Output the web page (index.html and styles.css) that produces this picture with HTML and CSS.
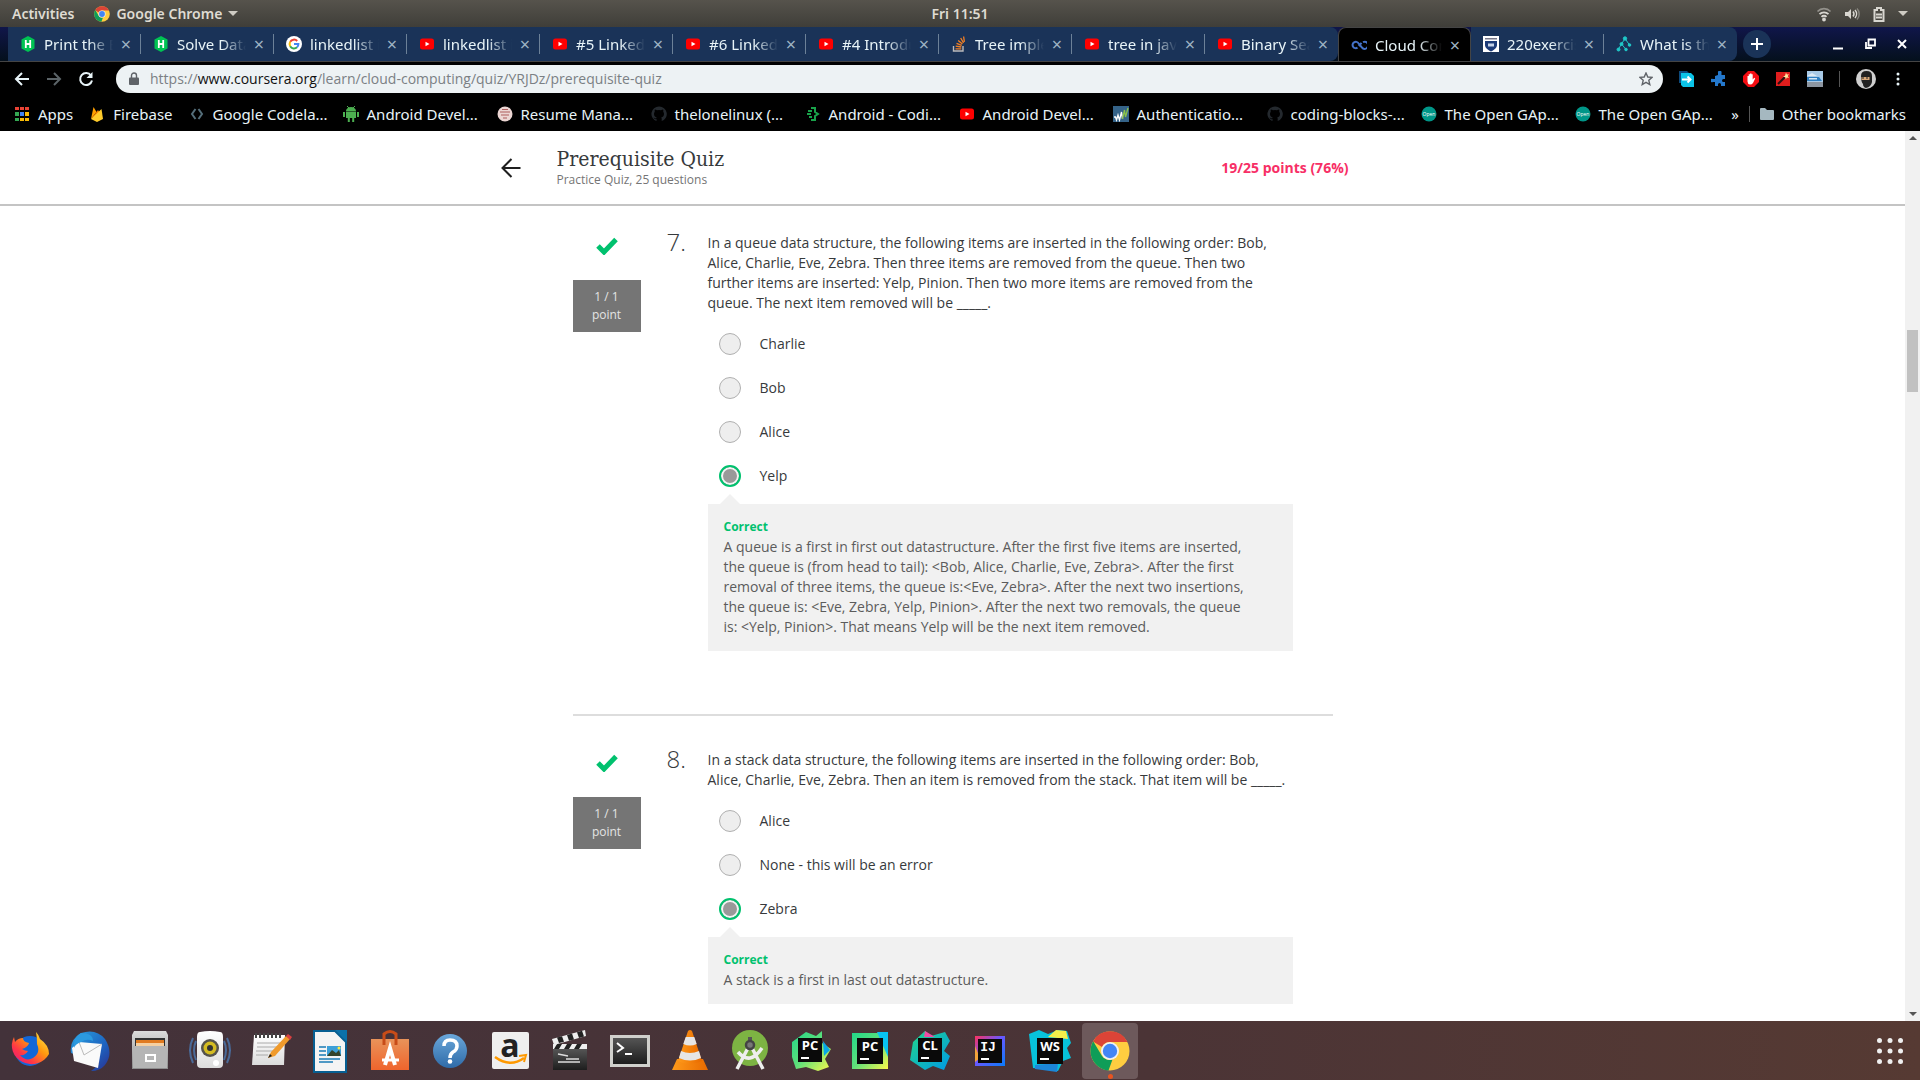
FILE: index.html
```html
<!DOCTYPE html>
<html lang="en">
<head>
<meta charset="utf-8">
<title>Prerequisite Quiz</title>
<link rel="stylesheet" href="styles.css">
</head>
<body>
<svg class="defs" width="0" height="0" aria-hidden="true">
  <defs>
    <linearGradient id="fox" x1="1" y1="0" x2="0" y2="1"><stop offset="0" stop-color="#fff44f"/><stop offset=".4" stop-color="#ff980e"/><stop offset=".7" stop-color="#ff3647"/><stop offset="1" stop-color="#e31587"/></linearGradient>
    <linearGradient id="bird" x1="0" y1="0" x2="1" y2="1"><stop offset="0" stop-color="#2aa3e0"/><stop offset=".6" stop-color="#1d63c0"/><stop offset="1" stop-color="#2b2f8f"/></linearGradient>
    <linearGradient id="metal" x1="0" y1="0" x2="0" y2="1"><stop offset="0" stop-color="#dcdcdc"/><stop offset="1" stop-color="#8c8c8c"/></linearGradient>
    <linearGradient id="paper" x1="0" y1="0" x2="0" y2="1"><stop offset="0" stop-color="#ffffff"/><stop offset="1" stop-color="#dcdcdc"/></linearGradient>
    <linearGradient id="bag" x1="0" y1="0" x2="0" y2="1"><stop offset="0" stop-color="#e8935a"/><stop offset="1" stop-color="#f0642c"/></linearGradient>
    <linearGradient id="ask" x1="0" y1="0" x2="0" y2="1"><stop offset="0" stop-color="#6aa7da"/><stop offset="1" stop-color="#2f6ba8"/></linearGradient>
    <linearGradient id="coal" x1="0" y1="0" x2="0" y2="1"><stop offset="0" stop-color="#555"/><stop offset="1" stop-color="#1d1d1d"/></linearGradient>
    <linearGradient id="idea" x1="0" y1="0" x2="1" y2="1"><stop offset="0" stop-color="#fe315d"/><stop offset=".45" stop-color="#6b57ff"/><stop offset="1" stop-color="#087cfa"/></linearGradient>
    <linearGradient id="py" x1="0" y1="0" x2="1" y2="1"><stop offset="0" stop-color="#21d789"/><stop offset=".5" stop-color="#5fe07a"/><stop offset="1" stop-color="#fcf84a"/></linearGradient>
    <linearGradient id="cl" x1="0" y1="0" x2="1" y2="1"><stop offset="0" stop-color="#21d789"/><stop offset="1" stop-color="#009ae5"/></linearGradient>
    <linearGradient id="cone" x1="0" y1="0" x2="1" y2="0"><stop offset="0" stop-color="#ff9a1a"/><stop offset="1" stop-color="#e86a00"/></linearGradient>
    <symbol id="chrome" viewBox="0 0 40 40">
      <circle cx="20" cy="20" r="19.500" fill="#ffcd40"/>
      <path d="M3 10.500A19.500 19.500 0 0 1 37.500 11H20A9 9 0 0 0 12 16z" fill="#db4437"/>
      <path d="M3.200 10.200 12 25A9 9 0 0 0 22.500 28.600L18.500 39.500A19.500 19.500 0 0 1 3.200 10.200z" fill="#0f9d58"/>
      <circle cx="20" cy="20" r="9" fill="#f1f1f1"/><circle cx="20" cy="20" r="7.200" fill="#4285f4"/>
    </symbol>
    <symbol id="youtube" viewBox="0 0 16 16"><rect x="1" y="2.500" width="14" height="11" rx="2.500" fill="#f00"/><path d="M6.500 5.700v4.600l4-2.300z" fill="#fff"/></symbol>
    <symbol id="hacker" viewBox="0 0 16 16"><path d="M8 0l6.500 3.500v9L8 16l-6.500-3.500v-9z" fill="#00c353"/><path d="M5.800 4v8M10.200 4v8M5.800 8h4.400" stroke="#fff" stroke-width="1.800"/></symbol>
    <symbol id="octo" viewBox="0 0 16 16"><path d="M8 .5a7.500 7.500 0 0 0-2.500 14.600v-2c-2 .4-2.500-1-3-1.700 1 0 1.500 1.100 2.600 1 .2-.6.500-.9.700-1C3.900 11.100 3 10 3 7.800c0-.9.300-1.600.8-2.100-.2-.6-.2-1.400.1-2.200.8 0 1.500.4 2.100.8a7.300 7.300 0 0 1 4 0c.6-.4 1.300-.8 2.100-.8.300.8.300 1.600.1 2.200.5.500.8 1.200.8 2.100 0 2.200-.9 3.300-2.800 3.600.4.400.5 1 .5 1.700v2A7.500 7.500 0 0 0 8 .5z" fill="#24292e"/></symbol>
    <symbol id="gapps" viewBox="0 0 16 16"><circle cx="8" cy="8" r="7.500" fill="#009688"/><text x="8" y="10" font-size="5" font-family="Open Sans, sans-serif" text-anchor="middle" fill="#fff">Open</text></symbol>
  </defs>
</svg>

<header class="panel">
  <div class="panel-left">
    <span>Activities</span>
    <span class="app"><svg width="16" height="16"><use href="#chrome"/></svg>Google Chrome<i class="caret"></i></span>
  </div>
  <time>Fri 11:51</time>
  <div class="panel-right">
    <svg width="16" height="16" viewBox="0 0 16 16" fill="none" stroke="#d8d6d0" stroke-width="1.800"><path d="M1.500 5.500a9 9 0 0 1 13 0" opacity=".5"/><path d="M3.500 8.200a6.300 6.300 0 0 1 9 0M5.500 10.800a3.500 3.500 0 0 1 5 0"/><circle cx="8" cy="13.500" r="1" fill="#d8d6d0"/></svg>
    <svg width="16" height="16" viewBox="0 0 16 16" fill="none" stroke="#d8d6d0" stroke-width="1.500"><path d="M1 6h3l3-3v10l-3-3H1z" fill="#d8d6d0" stroke="none"/><path d="M9 5.500a4 4 0 0 1 0 5M11 4a6 6 0 0 1 0 8"/><path d="M13 2.500a8 8 0 0 1 0 11" opacity=".4"/></svg>
    <svg width="14" height="16" viewBox="0 0 14 16" fill="none" stroke="#d8d6d0" stroke-width="2"><path d="M5 2h4v2h2.500v11h-9V4H5z"/><path d="M4 8.500h6M4 11.500h6"/></svg>
    <i class="caret"></i>
  </div>
</header>

<nav class="tabs" aria-label="Tabs">
  <div class="tab"><svg width="16" height="16"><use href="#hacker"/></svg><span>Print the Elements</span><button aria-label="Close tab">×</button></div>
  <div class="tab"><svg width="16" height="16"><use href="#hacker"/></svg><span>Solve Data Structures</span><button aria-label="Close tab">×</button></div>
  <div class="tab"><svg width="16" height="16" viewBox="0 0 16 16"><circle cx="8" cy="8" r="8" fill="#fff"/><g fill="none" stroke-width="2"><path d="M4.200 5.800A4.400 4.400 0 0 1 11.200 5" stroke="#ea4335"/><path d="M4.200 5.800a4.400 4.400 0 0 0 0 4.400" stroke="#fbbc05"/><path d="M4.200 10.200a4.400 4.400 0 0 0 6.800 1.100" stroke="#34a853"/><path d="M11 11.300A4.400 4.400 0 0 0 12.400 8H8" stroke="#4285f4"/></g></svg><span>linkedlist in java</span><button aria-label="Close tab">×</button></div>
  <div class="tab"><svg width="16" height="16"><use href="#youtube"/></svg><span>linkedlist in java</span><button aria-label="Close tab">×</button></div>
  <div class="tab"><svg width="16" height="16"><use href="#youtube"/></svg><span>#5 Linked List</span><button aria-label="Close tab">×</button></div>
  <div class="tab"><svg width="16" height="16"><use href="#youtube"/></svg><span>#6 Linked List</span><button aria-label="Close tab">×</button></div>
  <div class="tab"><svg width="16" height="16"><use href="#youtube"/></svg><span>#4 Introduction</span><button aria-label="Close tab">×</button></div>
  <div class="tab"><svg width="16" height="16" viewBox="0 0 16 16" fill="none"><path d="M2.500 10v5h9.500v-5" stroke="#bcbbbb" stroke-width="1.400"/><path d="M4.500 12.800h5.800M4.700 10.200l5.600.8M5.500 7.300l5.200 2M7.200 4.500l4.200 3.600M9.700 2l2.800 4.800M12.600.5l.8 5.300" stroke="#f48024" stroke-width="1.300"/></svg><span>Tree implementation</span><button aria-label="Close tab">×</button></div>
  <div class="tab"><svg width="16" height="16"><use href="#youtube"/></svg><span>tree in java</span><button aria-label="Close tab">×</button></div>
  <div class="tab last"><svg width="16" height="16"><use href="#youtube"/></svg><span>Binary Search Tree</span><button aria-label="Close tab">×</button></div>
  <div class="tab active"><svg width="16" height="16" viewBox="0 0 16 16"><path d="M12 5.200a3.500 3.500 0 1 1-1.200 5.200L7.500 6.300a3.200 3.200 0 1 0-1 4.400M7.800 9l2.700-3.200" fill="none" stroke="#4472c8" stroke-width="2"/></svg><span>Cloud Computing</span><button aria-label="Close tab">×</button></div>
  <div class="tab"><svg width="16" height="16" viewBox="0 0 16 16"><path d="M0 0h16v16H0z" fill="#fff"/><path d="M2 5h12v4c0 3-3 5-6 6.500C5 14 2 12 2 9z" fill="#1b3a78"/><path d="M2 2h12v1.500H2z" fill="#778"/><path d="M5 7.500h6v3H5z" fill="#c4d2e8"/></svg><span>220exercises</span><button aria-label="Close tab">×</button></div>
  <div class="tab last"><svg width="16" height="16" viewBox="0 0 16 16" fill="#1fc8c8" stroke="#1fc8c8"><path d="M9 2.500 5.500 8 2.500 13M9 2.500 13.500 9M5.500 8l4.500 5.500" fill="none"/><circle cx="9" cy="2.500" r="1.700"/><circle cx="5.500" cy="8" r="1.500"/><circle cx="2.500" cy="13.500" r="1.500"/><circle cx="13.500" cy="9" r="1.300"/><circle cx="10" cy="13.500" r="1.300"/></svg><span>What is the tree</span><button aria-label="Close tab">×</button></div>
  <button class="newtab" aria-label="New tab"><svg width="14" height="14" viewBox="0 0 14 14"><path d="M7 1v12M1 7h12" stroke="#fff" stroke-width="2"/></svg></button>
  <div class="window">
    <button aria-label="Minimize"><svg width="12" height="12" viewBox="0 0 12 12"><path d="M1 10.500h10" stroke="#fff" stroke-width="2"/></svg></button>
    <button aria-label="Restore"><svg width="12" height="12" viewBox="0 0 12 12" fill="none" stroke="#fff" stroke-width="1.800"><path d="M4.500 1.500H11v6H4.500zM2 4v6h6"/></svg></button>
    <button aria-label="Close"><svg width="12" height="12" viewBox="0 0 12 12"><path d="M2 2l8 8M10 2l-8 8" stroke="#fff" stroke-width="2"/></svg></button>
  </div>
</nav>

<div class="toolbar">
  <button aria-label="Back"><svg width="16" height="16" viewBox="0 0 16 16"><path d="M15 8H2M8 2 2 8l6 6" fill="none" stroke="#e8f4f8" stroke-width="2"/></svg></button>
  <button aria-label="Forward"><svg width="16" height="16" viewBox="0 0 16 16"><path d="M1 8h13M8 2l6 6-6 6" fill="none" stroke="#5c6468" stroke-width="2"/></svg></button>
  <button aria-label="Reload"><svg width="16" height="16" viewBox="0 0 16 16"><path d="M13 4.500A6 6 0 1 0 14 9.500" fill="none" stroke="#e8f4f8" stroke-width="2"/><path d="M14.500 1v6h-6z" fill="#e8f4f8"/></svg></button>
  <div class="omnibox">
    <svg width="10" height="14" viewBox="0 0 10 14"><path d="M1 5.500h8q1 0 1 1V12q0 1-1 1H1q-1 0-1-1V6.500q0-1 1-1z" fill="#5f6368"/><path d="M2.500 6V3.500a2.500 2.500 0 0 1 5 0V6" fill="none" stroke="#5f6368" stroke-width="1.400"/></svg>
    <a class="url" href="#quiz">https://<b>www.coursera.org</b>/learn/cloud-computing/quiz/YRJDz/prerequisite-quiz</a>
    <svg width="14" height="14" viewBox="0 0 14 14"><path d="M7 1l1.800 4 4.200.4-3.200 2.900 1 4.300L7 10.400l-3.800 2.200 1-4.300L1 5.400 5.200 5z" fill="none" stroke="#5f6368" stroke-width="1.400"/></svg>
  </div>
  <div class="extensions">
    <svg width="16" height="16" viewBox="0 0 16 16"><path d="M0 0h8l3 3v9H0z" fill="#0d4a7c"/><path d="M2 2h10l3 3v11H4l-2-2z" fill="#0bc4e8"/><path d="M3 8.500h8M8.500 5.500l3 3-3 3" stroke="#fff" stroke-width="2" fill="none"/></svg>
    <svg width="16" height="16" viewBox="0 0 16 16"><path d="M7 4V2a1.800 1.800 0 1 1 3.500 0v2H14v4h-1.500a1.500 1.500 0 0 0 0 3H14v4h-4v-1.500a1.500 1.500 0 0 0-3 0V15H4v-4H2a1.800 1.800 0 1 1 0-3h2V5z" fill="#2478cc"/></svg>
    <svg width="16" height="16" viewBox="0 0 16 16"><path d="M5 0h6l5 5v6l-5 5H5l-5-5V5z" fill="#f40d12"/><path d="M4.500 8V5h1.200v3V3.200H7V7.500 2.500h1.500v5V3.200h1.200V8.500l1.500-1.700 1 .7-2.200 4.500q-1 1.500-3 1.500-2.500-.5-2.500-3z" fill="#fff"/></svg>
    <svg width="16" height="16" viewBox="0 0 16 16"><path d="M1 1h14v14H1z" fill="#e01d1d"/><path d="M3 13l7-7" stroke="#2b1010" stroke-width="2.200"/><path d="M11 1.500l.8 2 2.200-.3-1.300 1.800L14 7l-2.200-.4-1 1.900-.5-2.300L8 5.700l2-1z" fill="#ffe9a0"/></svg>
    <svg width="16" height="16" viewBox="0 0 16 16"><path d="M0 0h16v16H0z" fill="#a8c9e6"/><path d="M0 5l5-3 5 3z" fill="#dce9f4"/><path d="M0 6h12l3 4H0z" fill="#2e7fc2"/><path d="M2 7h8v1.500H2z" fill="#d5e7f5"/><path d="M0 11h16v5H0z" fill="#8c95a0"/></svg>
    <i class="rule"></i>
    <svg class="avatar" width="20" height="20" viewBox="0 0 20 20"><circle cx="10" cy="10" r="10" fill="#cfcfcf"/><path d="M5 7q0-5 5.500-5T16 7v6q-1 5-6 6-3-1-3-4-2-2-2-8z" fill="#222"/><path d="M5.500 8h8v3h-8z" fill="#d8a878"/><path d="M6 9h2M10 9h2" stroke="#222"/></svg>
    <svg width="4" height="16" viewBox="0 0 4 16" fill="#e8f4f8"><circle cx="2" cy="3" r="1.500"/><circle cx="2" cy="8" r="1.500"/><circle cx="2" cy="13" r="1.500"/></svg>
  </div>
</div>

<nav class="bookmarks" aria-label="Bookmarks">
  <a class="auto" href="#apps"><svg width="16" height="16" viewBox="0 0 16 16"><path d="M1 1h4v3H1zM6 1h4v3H6zM11 1h4v3h-4z" fill="#ea4335"/><path d="M1 6h4v4H1z" fill="#34a853"/><path d="M6 6h4v4H6z" fill="#4285f4"/><path d="M11 6h4v4h-4zM6 12h4v3H6zM11 12h4v3h-4z" fill="#fbbc05"/><path d="M1 12h4v3H1z" fill="#34a853"/></svg>Apps</a>
  <a class="auto" href="#firebase"><svg width="16" height="16" viewBox="0 0 16 16"><path d="M2 13 4.500 1l3 5z" fill="#ffa000"/><path d="M2 13 9 4l2 3z" fill="#f57c00"/><path d="M2 13 12.500 3 14 13l-6 3z" fill="#ffcb2b"/></svg>Firebase</a>
  <a href="#b3"><svg width="16" height="16" viewBox="0 0 16 16"><path d="M6.500 3 3 8l3.500 5M9.500 3 13 8l-3.500 5" fill="none" stroke="#546e7a" stroke-width="2"/></svg>Google Codela...</a>
  <a href="#b4"><svg width="16" height="16" viewBox="0 0 16 16" fill="#4caf50"><path d="M3 5.500h10V12H3zM3 5a5 4 0 0 1 10 0zM0 6h2v5H0zM14 6h2v5h-2zM4.800 12h2v4h-2zM9.200 12h2v4h-2z"/><path d="M4 0l2 2M12 0l-2 2" stroke="#4caf50"/></svg>Android Devel...</a>
  <a href="#b5"><svg width="16" height="16" viewBox="0 0 16 16"><circle cx="8" cy="8" r="7.500" fill="#ecd6d3"/><path d="M3 6h10M4 9h8M6 12h4M5 3.500h6" stroke="#ad5d5d" stroke-width="1.200"/></svg>Resume Mana...</a>
  <a href="#b6"><svg width="16" height="16"><use href="#octo"/></svg>thelonelinux (...</a>
  <a href="#b7"><svg width="16" height="16" viewBox="0 0 16 16" fill="none" stroke="#19a34a" stroke-width="2"><path d="M6 2h4v4l3 2-3 2v4H6M3 5h4M2 8h4M4 11h3"/></svg>Android - Codi...</a>
  <a href="#b8"><svg width="16" height="16"><use href="#youtube"/></svg>Android Devel...</a>
  <a href="#b9"><svg width="16" height="16" viewBox="0 0 16 16"><path d="M0 0h16v16H0z" fill="#356388"/><path d="M1 11h1.500l1 3 1.500-5 1.500 5 2-8 1 7" fill="none" stroke="#fff" stroke-width="1.300"/><path d="M9.500 13 11.500 4l1 7L15 2" fill="none" stroke="#8bc34a" stroke-width="1.300"/></svg>Authenticatio...</a>
  <a href="#b10"><svg width="16" height="16"><use href="#octo"/></svg>coding-blocks-...</a>
  <a href="#b11"><svg width="16" height="16"><use href="#gapps"/></svg>The Open GAp...</a>
  <a href="#b12"><svg width="16" height="16"><use href="#gapps"/></svg>The Open GAp...</a>
  <div class="more"><span>»</span><i class="rule"></i><a class="auto" href="#other"><svg width="14" height="14" viewBox="0 0 14 14"><path d="M0 2q0-1 1-1h4l2 2h6q1 0 1 1v8q0 1-1 1H1q-1 0-1-1z" fill="#a5b8c0"/></svg>Other bookmarks</a></div>
</nav>

<div class="viewport">
  <main id="quiz">
    <header class="quiz-header">
      <button class="back" aria-label="Back to course"><svg width="20" height="20" viewBox="0 0 20 20"><path d="M19.500 10H2M10.500 1 1.500 10l9 9" fill="none" stroke="#1f1f1f" stroke-width="2"/></svg></button>
      <div class="heading">
        <div><h1>Prerequisite Quiz</h1><p>Practice Quiz, 25 questions</p></div>
        <strong>19/25 points (76%)</strong>
      </div>
    </header>
    <div class="questions">
      <section class="question">
        <div class="status"><svg width="24" height="18" viewBox="0 0 24 18"><path d="M3 9l6 6L21 2.500" fill="none" stroke="#00c16e" stroke-width="5"/></svg><div class="badge">1 / 1<br>point</div></div>
        <div class="number">7.</div>
        <div class="body">
          <p>In a queue data structure, the following items are inserted in the following order: Bob, Alice, Charlie, Eve, Zebra. Then three items are removed from the queue. Then two further items are inserted: Yelp, Pinion. Then two more items are removed from the queue. The next item removed will be _____.</p>
          <label><input type="radio" name="q7">Charlie</label>
          <label><input type="radio" name="q7">Bob</label>
          <label><input type="radio" name="q7">Alice</label>
          <label><input type="radio" name="q7" checked>Yelp</label>
          <div class="feedback"><h2>Correct</h2><p>A queue is a first in first out datastructure. After the first five items are inserted, the queue is (from head to tail): &lt;Bob, Alice, Charlie, Eve, Zebra&gt;. After the first removal of three items, the queue is:&lt;Eve, Zebra&gt;. After the next two insertions, the queue is: &lt;Eve, Zebra, Yelp, Pinion&gt;. After the next two removals, the queue is: &lt;Yelp, Pinion&gt;. That means Yelp will be the next item removed.</p></div>
        </div>
      </section>
      <section class="question">
        <div class="status"><svg width="24" height="18" viewBox="0 0 24 18"><path d="M3 9l6 6L21 2.500" fill="none" stroke="#00c16e" stroke-width="5"/></svg><div class="badge">1 / 1<br>point</div></div>
        <div class="number">8.</div>
        <div class="body">
          <p>In a stack data structure, the following items are inserted in the following order: Bob, Alice, Charlie, Eve, Zebra. Then an item is removed from the stack. That item will be _____.</p>
          <label><input type="radio" name="q8">Alice</label>
          <label><input type="radio" name="q8">None - this will be an error</label>
          <label><input type="radio" name="q8" checked>Zebra</label>
          <div class="feedback"><h2>Correct</h2><p>A stack is a first in last out datastructure.</p></div>
          <label><input type="radio" name="q8" aria-label="Fourth option"></label>
        </div>
      </section>
    </div>
  </main>
  <div class="scrollbar" aria-hidden="true"><i class="up"></i><i class="thumb"></i><i class="down"></i></div>
</div>

<footer class="dock">
  <button aria-label="Firefox"><svg width="44" height="44" viewBox="0 0 44 44"><circle cx="22" cy="22" r="15" fill="#1267d8"/><path d="M28 3q3 3 4 7 9 6 9 15A19 18 0 1 1 6 8l1 5q3-4 8-4 0 4 6 5-1 4-7 6 3 2 6 2-3 5-8 4 6 7 13 3 8-5 4-14 0-7-1-12z" fill="url(#fox)"/></svg></button>
  <button aria-label="Thunderbird"><svg width="44" height="44" viewBox="0 0 44 44"><path d="M3 24Q1 11 13 4q15-5 24 6 9 14 0 26-5 6-14 6 6-4 8-8z" fill="url(#bird)"/><path d="M4 19l7-6 23 2-4 24-24-7z" fill="#fafafa"/><path d="M11 13l5 13 18-11" fill="none" stroke="#bbb"/><path d="M13 4q12 0 12 8-6-3-12 1-6 2-7 6Q5 8 13 4z" fill="#2b9ae0"/></svg></button>
  <button aria-label="Files"><svg width="44" height="44" viewBox="0 0 44 44"><path d="M6 2h32l2 4v34H4V6z" fill="url(#metal)"/><path d="M7 9h30v8H7z" fill="#333"/><path d="M8 11h28v6H8z" fill="#e07a20"/><path d="M8 14h28v3H8z" fill="#f5cfa0"/><path d="M5 17h34v22H5z" fill="#b5b5b5"/><path d="M18 26h9v6h-9z" fill="none" stroke="#fff" stroke-width="2"/></svg></button>
  <button aria-label="Rhythmbox"><svg width="44" height="44" viewBox="0 0 44 44"><path d="M5 9q-6 12 0 25M39 9q6 12 0 25M8 12q-4 9 0 19M36 12q4 9 0 19" fill="none" stroke="#4a6a98" stroke-width="2"/><path d="M12 3q10-2 20 0 3 0 3 5v27q0 4-4 4H13q-4 0-4-4V8q0-5 3-5z" fill="url(#paper)"/><circle cx="22" cy="19" r="9" fill="#55534c"/><circle cx="22" cy="19" r="6.500" fill="#d4bc22"/><circle cx="22" cy="19" r="3" fill="#333"/><circle cx="28" cy="34" r="3" fill="#fff"/></svg></button>
  <button aria-label="Text Editor"><svg width="44" height="44" viewBox="0 0 44 44"><path d="M6 6h31l-1 30H4z" fill="url(#paper)"/><path d="M8 4v5M12 4v5M16 4v5M20 4v5M24 4v5M28 4v5M32 4v5" stroke="#444" stroke-width="2"/><path d="M9 14h24M9 18h22M8 22h18M8 26h12" stroke="#aaa"/><path d="M20 29l3-6L38 7l4 3-15 17z" fill="#f09a2b"/><path d="M38 7l2-2 4 3-2 3z" fill="#d94040"/><path d="M20 29l2-4 2 2z" fill="#222"/></svg></button>
  <button aria-label="Writer"><svg width="44" height="44" viewBox="0 0 44 44"><path d="M6 2h21l11 11v30H6z" fill="#f4f4f4" stroke="#075f92" stroke-width="2"/><path d="M27 1h12v12z" fill="#0b71aa"/><path d="M11 18h7M11 22h7M11 26h7M11 30h21M11 33h14" stroke="#187bb5" stroke-width="1.500"/><path d="M19 17h14v10H19z" fill="#3da0d8"/><path d="M19 27l5-6 4 3 3-3 2 6z" fill="#34442a"/><circle cx="31" cy="19" r="1.500" fill="#ffec45"/></svg></button>
  <button aria-label="Ubuntu Software"><svg width="44" height="44" viewBox="0 0 44 44"><path d="M3 10h38v31H3z" fill="url(#bag)"/><path d="M16 16V5q6-5 12 0v11" fill="none" stroke="#c84c18" stroke-width="3"/><path d="M17 36l5-17 5 17" fill="none" stroke="#fff" stroke-width="4"/><path d="M14 31h17" stroke="#fff" stroke-width="3"/></svg></button>
  <button aria-label="Help"><svg width="44" height="44" viewBox="0 0 44 44"><circle cx="22" cy="22" r="17" fill="url(#ask)"/><path d="M16 17q0-6 6-6 7 0 7 6 0 4-4 6-3 2-3 6" fill="none" stroke="#fff" stroke-width="3.500"/><circle cx="22" cy="32.500" r="2.300" fill="#fff"/></svg></button>
  <button aria-label="Amazon"><svg width="44" height="44" viewBox="0 0 44 44"><rect x="4" y="3" width="37" height="37" rx="2" fill="#efefef"/><text class="amazon" x="22" y="28" text-anchor="middle">a</text><path d="M7 28q15 11 29 1" fill="none" stroke="#f90" stroke-width="2.500"/><path d="M31 27l7-1-2 7" fill="none" stroke="#f90" stroke-width="2"/></svg></button>
  <button aria-label="Videos"><svg width="44" height="44" viewBox="0 0 44 44"><path d="M5 20h34v21H5z" fill="url(#coal)"/><path d="M5 15h34v5H5z" fill="#eee"/><path d="M9 15h5l-3 5H6zM19 15h5l-3 5h-5zM29 15h5l-3 5h-5z" fill="#222"/><path d="M4 10 37 1l1 6L6 16z" fill="#eee"/><path d="M9 8.500l5-1.200 2 5.500-5 1.300zM19 6l5-1.500 2 6-5 1.300zM29 3.200l5-1.400 2 5.700-5 1.500z" fill="#222"/><path d="M10 25l10 2M10 33h22M18 30h13" stroke="#ddd" stroke-width="1.500"/></svg></button>
  <button aria-label="Terminal"><svg width="44" height="44" viewBox="0 0 44 44"><path d="M2 6h40v32H2z" fill="#d0d0cc"/><path d="M5 9h34v26H5z" fill="url(#coal)"/><path d="M9 14l6 5-6 4M17 25h7" fill="none" stroke="#fff" stroke-width="2"/></svg></button>
  <button aria-label="VLC"><svg width="44" height="44" viewBox="0 0 44 44"><path d="M9 30h26l5 11H4z" fill="url(#cone)"/><path d="M20 2q2-2 4 0l10 30q-12 6-24 0z" fill="url(#cone)"/><path d="M17.700 8h8.600l2.400 7q-6.700 3-13.400 0zM13 22q9 4 18 0l2 7q-11 5-22 0z" fill="#e6e6e6"/></svg></button>
  <button aria-label="Android Studio"><svg width="44" height="44" viewBox="0 0 44 44"><circle cx="22" cy="19" r="18" fill="#7db343"/><path d="M22 8v6" stroke="#555" stroke-width="4"/><path d="M20 19 9 40M24 19l11 21M10 23q12 14 24-4" fill="none" stroke="#eee" stroke-width="3.500"/><circle cx="22" cy="16" r="4" fill="#777" stroke="#444" stroke-width="2.500"/></svg></button>
  <button aria-label="PyCharm"><svg width="44" height="44" viewBox="0 0 44 44"><path d="M4 13 18 3l10 4 6-5v12l9 6-6 10 4 8-11 4-12-4-10 2-4-12z" fill="url(#py)"/><path d="M35 12l7 9-6 6z" fill="#07a7e8"/><path d="M10 9h24v24H10z" fill="#0a0a0a"/><text class="ide" x="22" y="21" text-anchor="middle">PC</text><path d="M13 29h8" stroke="#fff" stroke-width="2"/></svg></button>
  <button aria-label="PyCharm Professional"><svg width="44" height="44" viewBox="0 0 44 44"><path d="M4 4h36v36H4z" fill="url(#py)"/><path d="M29 3h11v25z" fill="#07c3f2"/><path d="M9 9h26v26H9z" fill="#0a0a0a"/><text class="ide" x="22" y="22" text-anchor="middle">PC</text><path d="M12 30h9" stroke="#fff" stroke-width="2"/></svg></button>
  <button aria-label="CLion"><svg width="44" height="44" viewBox="0 0 44 44"><path d="M5 13 17 2l6 5 14-4 5 9-6 10 6 5-6 14-11-4-8 4L2 31z" fill="url(#cl)"/><path d="M17 2l10 6H16z" fill="#f04ba3"/><path d="M10 9h24v24H10z" fill="#0a0a0a"/><text class="ide" x="22" y="21" text-anchor="middle">CL</text><path d="M13 29h8" stroke="#fff" stroke-width="2"/></svg></button>
  <button aria-label="IntelliJ IDEA"><svg width="44" height="44" viewBox="0 0 44 44"><path d="M7 7h30v30H7z" fill="url(#idea)"/><path d="M7 17l5 12-5 4z" fill="#f3a43a"/><path d="M10 10h24v24H10z" fill="#0a0a0a"/><text class="ide mono" x="20" y="22" text-anchor="middle">IJ</text><path d="M13 30h8" stroke="#fff" stroke-width="2"/></svg></button>
  <button aria-label="WebStorm"><svg width="44" height="44" viewBox="0 0 44 44"><path d="M1 5 11 1l9 4 10-4 9 1 4 12-4 5 4 10-8 3-5 10-25-3z" fill="#07c3dc"/><path d="M20 8l8-7 10 1 2 8z" fill="#f5f04a"/><path d="M7 36l23-2-1 9-22-3z" fill="#1c86d8"/><path d="M9 9h26v26H9z" fill="#0a0a0a"/><text class="ide" x="22" y="22" text-anchor="middle">WS</text><path d="M12 30h9" stroke="#fff" stroke-width="2"/></svg></button>
  <button class="running" aria-label="Google Chrome"><svg width="40" height="40"><use href="#chrome"/></svg></button>
  <button class="grid" aria-label="Show Applications"><svg width="28" height="28" viewBox="0 0 28 28" fill="#f0f0f0"><circle cx="3.500" cy="3.500" r="2.500"/><circle cx="14" cy="3.500" r="2.500"/><circle cx="24.500" cy="3.500" r="2.500"/><circle cx="3.500" cy="14" r="2.500"/><circle cx="14" cy="14" r="2.500"/><circle cx="24.500" cy="14" r="2.500"/><circle cx="3.500" cy="24.500" r="2.500"/><circle cx="14" cy="24.500" r="2.500"/><circle cx="24.500" cy="24.500" r="2.500"/></svg></button>
</footer>
</body>
</html>
```
FILE: styles.css
```css
* { box-sizing: border-box; }

body {
  margin: 0;
  height: 100vh;
  display: flex;
  flex-direction: column;
  overflow: hidden;
  font: 15px/20px "Noto Sans", "Open Sans", sans-serif;
  color: #e8f4f8;
  background: #000;
}

button {
  padding: 0;
  border: 0;
  background: none;
  color: inherit;
  font: inherit;
  display: flex;
  align-items: center;
  justify-content: center;
}

svg { flex: none; display: block; }
.defs { position: absolute; }
a { color: inherit; text-decoration: none; }

/* Desktop panel */
.panel {
  flex: none;
  height: 27px;
  padding: 0 12px;
  display: grid;
  grid-template-columns: 1fr auto 1fr;
  align-items: center;
  background: linear-gradient(#56534c, #3f3e39);
  color: #dfdbd2;
  font-size: 14px;
  font-weight: 600;
}
.panel-left, .app, .panel-right { display: flex; align-items: center; }
.panel-left { gap: 20px; }
.app { gap: 6px; }
.panel-right { justify-content: flex-end; gap: 12px; }
.panel .caret {
  border: 5px solid transparent;
  border-top-color: #cfccc4;
  border-bottom-width: 0;
}

/* Tab strip */
.tabs {
  flex: none;
  height: 35px;
  padding: 0 8px;
  display: flex;
  background: linear-gradient(#10164a, #04101c);
  border-bottom: 1px solid #444;
}
.tab {
  position: relative;
  flex: 0 1 133px;
  min-width: 0;
  display: flex;
  align-items: center;
  gap: 8px;
  padding: 0 10px 0 12px;
  background: #1a3358;
}
.tab:not(.last):not(.active)::after {
  content: "";
  position: absolute;
  right: 0;
  top: 7px;
  height: 20px;
  border-right: 1px solid #6c8198;
}
.tab span {
  flex: 1;
  min-width: 0;
  overflow: hidden;
  white-space: nowrap;
  mask-image: linear-gradient(90deg, #000 65%, transparent);
}
.tab button { color: #9fb4c4; font-size: 18px; width: 10px; }
.tab.active {
  background: #000;
  border: 1px solid #444;
  border-bottom: 0;
  border-radius: 8px 8px 0 0;
}
.tab.last { border-radius: 0 8px 8px 0; }
.newtab {
  align-self: center;
  width: 28px;
  height: 28px;
  margin-left: 6px;
  border-radius: 50%;
  background: #1a3358;
}
.window { margin-left: auto; display: flex; gap: 20px; padding-right: 4px; }

/* Toolbar */
.toolbar {
  flex: none;
  height: 34px;
  padding: 0 20px 0 14px;
  display: flex;
  align-items: center;
  gap: 16px;
}
.omnibox {
  flex: 1;
  height: 28px;
  margin-left: 6px;
  padding: 0 10px 0 13px;
  display: flex;
  align-items: center;
  gap: 11px;
  border-radius: 14px;
  background: #edf2f4;
}
.url { flex: 1; font: 14px/20px "Open Sans", sans-serif; color: #7b8084; }
.url b { font-weight: 400; color: #111; }
.extensions { display: flex; align-items: center; gap: 16px; }
.extensions .avatar { margin-right: 4px; }
.rule { width: 1px; height: 16px; background: #555; }

/* Bookmarks */
.bookmarks {
  flex: none;
  height: 35px;
  padding: 0 14px;
  display: flex;
  align-items: center;
  white-space: nowrap;
}
.bookmarks a { flex: 0 1 154px; display: flex; align-items: center; gap: 8px; }
.bookmarks .auto { flex: none; padding-right: 16px; }
.bookmarks .more { margin-left: auto; display: flex; align-items: center; gap: 10px; }
.bookmarks .more a { padding-right: 0; }

/* Page */
.viewport {
  flex: 1;
  min-height: 0;
  display: flex;
  overflow: hidden;
  background: #fff;
  color: #373a3c;
  font: 14px/20px "Open Sans", sans-serif;
}
main { flex: 1; overflow: hidden; }
.viewport p, h1, h2 { margin: 0; }

.quiz-header {
  height: 75px;
  display: grid;
  grid-template-columns: 1fr minmax(0, 792px) 1fr;
  align-items: center;
  border-bottom: 2px solid #c4c4c4;
}
.back { justify-self: end; margin-right: 36px; }
.heading { display: flex; justify-content: space-between; align-items: center; }
.heading h1 { font: 400 21px/24px "DejaVu Serif Condensed", "DejaVu Serif", serif; }
.heading p { font-size: 12px; line-height: 18px; color: #757575; }
.heading strong { color: #f72f66; }

.questions { max-width: 760px; margin: 0 auto; }
.question {
  display: grid;
  grid-template-columns: 68px 26px 41px minmax(0, 585px);
  padding: 27px 0;
}
.question + .question { margin-top: 18px; border-top: 2px solid #ddd; padding-top: 34px; }
.status { grid-column: 1; }
.status svg { margin: 4px auto 25px; }
.badge {
  padding: 8px 0;
  background: #757575;
  color: #e4e4e4;
  font-size: 12px;
  line-height: 18px;
  text-align: center;
}
.number { grid-column: 3; font-size: 24px; line-height: 18px; font-weight: 300; }
.body { grid-column: 4; }
.body > p { padding-bottom: 9px; }
.body label { height: 44px; padding-left: 11px; display: flex; align-items: center; gap: 19px; }

input[type="radio"] {
  appearance: none;
  flex: none;
  width: 22px;
  height: 22px;
  margin: 0;
  border: 1px solid #b0b0b0;
  border-radius: 50%;
  background: #eee;
}
input[type="radio"]:checked {
  border: 2px solid #00c16e;
  background: #999;
  box-shadow: inset 0 0 0 2px #f4f4f4;
}

.feedback {
  position: relative;
  margin: 6px 0 18px;
  padding: 13px 40px 14px 16px;
  background: #f1f1f1;
  color: #5c5c5c;
}
.feedback::before {
  content: "";
  position: absolute;
  left: 12px;
  top: -10px;
  border: 10px solid transparent;
  border-top: 0;
  border-bottom-color: #f1f1f1;
}
.feedback h2 { font-size: 12px; line-height: 20px; font-weight: 700; color: #00c16e; }

.scrollbar {
  flex: none;
  width: 15px;
  padding: 5px 2px;
  display: flex;
  flex-direction: column;
  align-items: center;
  background: #f1f1f1;
}
.up, .down { border: 4px solid transparent; }
.up { border-bottom-color: #555; border-top: 0; }
.down { border-top-color: #555; border-bottom: 0; margin-top: auto; }
.thumb { width: 11px; height: 62px; margin-top: 190px; background: #c1c1c1; }

/* Dock */
.dock {
  flex: none;
  height: 59px;
  display: flex;
  align-items: center;
  background: linear-gradient(90deg, #43323a, #4b3436 60%, #563a33);
}
.dock button { flex: 0 1 60px; height: 56px; }
.dock .running {
  position: relative;
  flex-basis: 56px;
  margin-left: 2px;
  border-radius: 4px;
  background: #6d595b;
}
.dock .running::after {
  content: "";
  position: absolute;
  bottom: 0;
  width: 5px;
  height: 5px;
  border-radius: 50%;
  background: #e95420;
}
.dock .grid { margin-left: auto; }
.amazon { font: 700 32px "Open Sans", sans-serif; fill: #222; }
.ide { font: 700 13px "Open Sans", sans-serif; fill: #fff; }
.mono { font-family: "Liberation Mono", monospace; }
```
